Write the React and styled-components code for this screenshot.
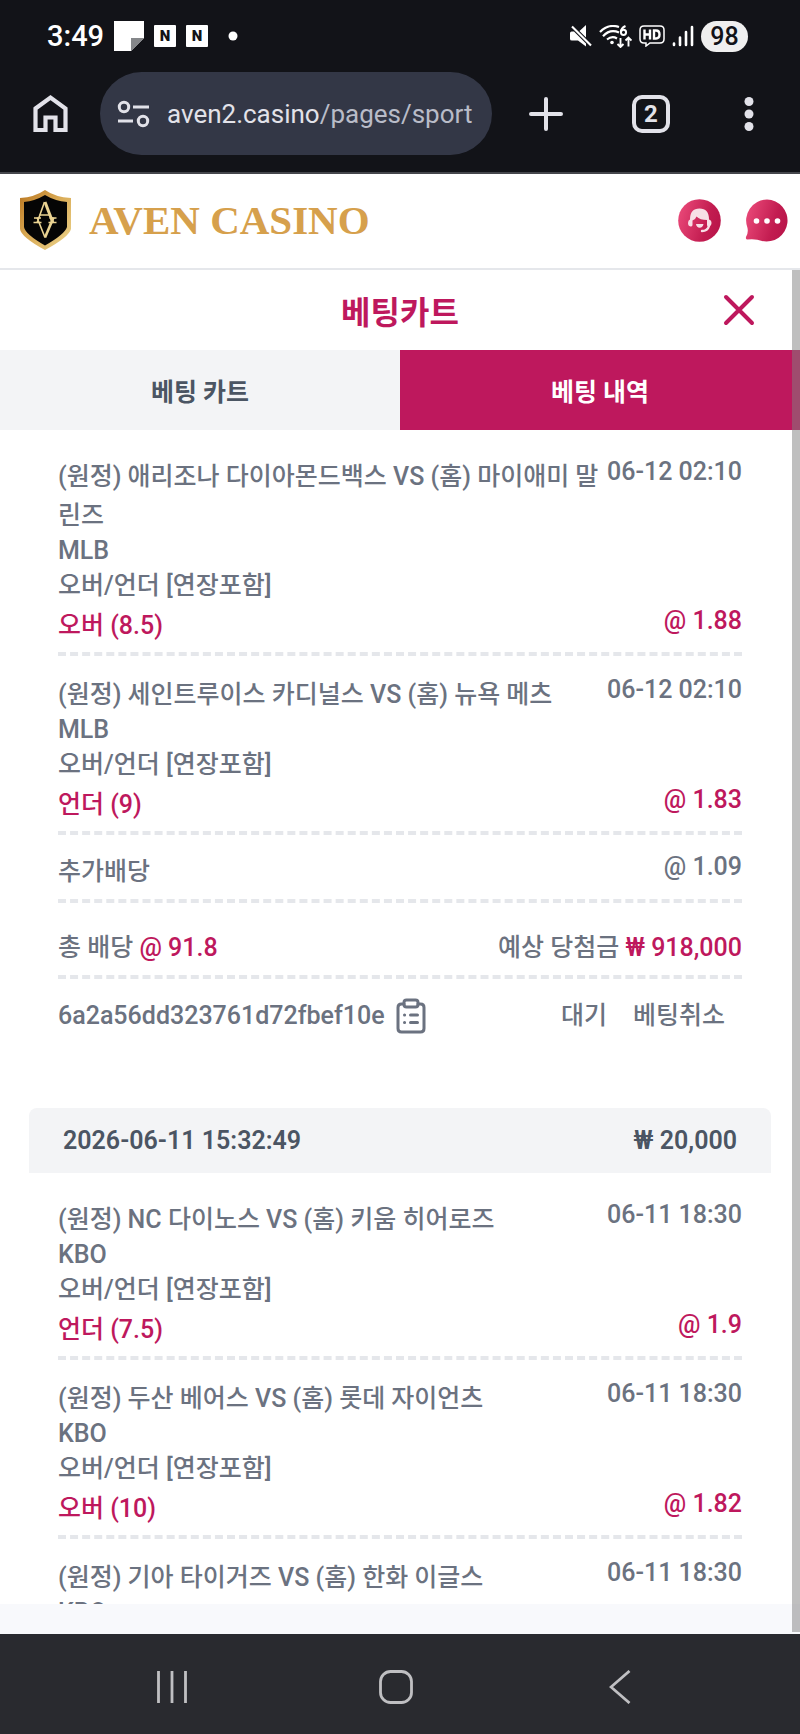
import React, { useState } from "react";
import styled, { createGlobalStyle } from "styled-components";

const GlobalStyle = createGlobalStyle`
    * {
        box-sizing: border-box;
    }
    body {
        margin: 0;
        background: #ffffff;
        font-family: Roboto, "Noto Sans CJK KR", sans-serif;
    }
    button {
        font-family: inherit;
        border: none;
        padding: 0;
        background: none;
        cursor: pointer;
    }
    svg {
        display: block;
        flex-shrink: 0;
    }
`;

const Screen = styled.div`
    display: flex;
    flex-direction: column;
    height: 100vh;
    overflow: hidden;
`;

const Chrome = styled.header`
    background: #121318;
    border-bottom: 2px solid #45474c;
    padding-bottom: 17px;
`;

const StatusBar = styled.div`
    display: flex;
    align-items: center;
    justify-content: space-between;
    height: 72px;
    padding: 0 52px 0 47px;
    color: #ffffff;
`;

const StatusGroup = styled.div`
    display: flex;
    align-items: center;
    gap: ${(props) => props.$gap}px;
`;

const Clock = styled.span`
    font-size: 29px;
    font-weight: 500;
`;

const AppBadge = styled.span`
    width: 22px;
    height: 22px;
    border-radius: 1px;
    background: #ffffff;
    color: #121318;
    font-size: 15px;
    line-height: 22px;
    font-weight: 900;
    text-align: center;
`;

const Battery = styled.span`
    width: 47px;
    height: 31px;
    border-radius: 16px;
    background: #efefef;
    color: #121318;
    font-size: 25px;
    line-height: 32px;
    font-weight: 500;
    text-align: center;
`;

const BrowserBar = styled.div`
    display: flex;
    align-items: center;
    padding: 0 41px 0 32px;
    color: #e2e2e9;
`;

const AddressBar = styled.button`
    display: flex;
    align-items: center;
    flex: 1;
    min-width: 0;
    height: 83px;
    margin: 0 37px 0 31px;
    padding: 0 12px 0 17px;
    border-radius: 42px;
    background: #333746;
    gap: 17px;
`;

const Url = styled.span`
    flex: 1;
    overflow: hidden;
    white-space: nowrap;
    text-align: left;
    font-size: 26px;
    color: #b9bcc8;

    b {
        font-weight: 400;
        color: #e2e2e9;
    }
`;

const BrowserActions = styled.div`
    display: flex;
    align-items: center;
    gap: 69px;
`;

const IconButton = styled.button`
    display: flex;
    color: ${(props) => props.color || "#e2e2e9"};
`;

const TabCount = styled.button`
    width: 38px;
    height: 38px;
    border: 4px solid #e2e2e9;
    border-radius: 10px;
    color: #e2e2e9;
    font-size: 24px;
    line-height: 30px;
    font-weight: 700;
`;

const SiteHeader = styled.header`
    display: flex;
    align-items: center;
    justify-content: space-between;
    height: 96px;
    padding: 0 12px 2px 19px;
    border-bottom: 2px solid #e5e7eb;
`;

const Brand = styled.a`
    display: flex;
    align-items: center;
    gap: 17px;
    color: #d6a04c;
    font-family: "Liberation Serif", serif;
    font-size: 41px;
    font-weight: 700;
    text-decoration: none;
`;

const HeaderActions = styled.div`
    display: flex;
    gap: 24px;
`;

const Page = styled.main`
    position: relative;
    flex: 1;
    min-height: 0;
    display: flex;
    flex-direction: column;
    padding-bottom: 30px;
    background: #f8f9fc;
`;

const ScrollThumb = styled.div`
    position: absolute;
    top: 0;
    right: 0;
    bottom: 2px;
    width: 8px;
    background: rgba(128, 128, 128, 0.5);
`;

const TitleBar = styled.div`
    display: grid;
    grid-template-columns: 1fr auto 1fr;
    align-items: center;
    height: 80px;
    padding: 0 45px;
    background: #ffffff;

    button {
        justify-self: end;
    }
`;

const Title = styled.h1`
    grid-column: 2;
    margin: 0;
    color: #be185d;
    font-size: 32px;
    font-weight: 700;
`;

const Tabs = styled.div`
    display: flex;
    flex-shrink: 0;
`;

const Tab = styled.button`
    flex: 1;
    height: 80px;
    font-size: 25px;
    font-weight: 600;
    color: ${(props) => (props.$active ? "#ffffff" : "#4b5563")};
    background: ${(props) => (props.$active ? "#be185d" : "#f3f4f6")};
`;

const History = styled.div`
    flex: 1;
    min-height: 0;
    overflow: hidden;
    background: #ffffff;
    color: #6b7280;
    font-size: 25px;
    line-height: 39px;
    font-weight: 500;
`;

const Slip = styled.section`
    margin: 0 29px;
`;

const SlipHeader = styled.div`
    display: flex;
    justify-content: space-between;
    margin-top: 73px;
    padding: 13px 34px;
    border-radius: 8px 8px 0 0;
    background: #f3f4f6;
    color: #4b5563;
    font-weight: 600;
`;

const SlipBody = styled.div`
    padding: 8px 29px 0;
`;

const Entry = styled.div`
    padding: 19px 0 7px;
    border-bottom: 4px dashed #e5e7eb;
`;

const Bonus = styled(Entry)`
    padding: 17px 0 8px;
`;

const Totals = styled(Entry)`
    display: flex;
    justify-content: space-between;
    padding: 25px 0 8px;
`;

const Line = styled.div`
    display: flex;
    justify-content: space-between;
    align-items: flex-start;
`;

const PickLine = styled(Line)`
    padding-top: 1px;
    color: #be185d;
`;

const Teams = styled.div`
    flex: 1;
    word-break: break-all;
`;

const League = styled.div`
    line-height: 31px;
`;

const Aside = styled.div`
    flex-shrink: 0;
    line-height: 29px;
`;

const Accent = styled.span`
    color: #be185d;
`;

const SlipFooter = styled.div`
    display: flex;
    align-items: center;
    justify-content: space-between;
    padding: 17px 17px 0 0;
`;

const SlipId = styled.div`
    display: flex;
    align-items: center;
    gap: 11px;
`;

const SlipStatus = styled.div`
    display: flex;
    gap: 26px;

    button {
        color: inherit;
        font-size: inherit;
        font-weight: inherit;
        line-height: inherit;
    }
`;

const NavBar = styled.nav`
    display: grid;
    grid-template-columns: repeat(3, 1fr);
    justify-items: center;
    align-items: center;
    flex-shrink: 0;
    height: 100px;
    padding: 6px 68px 0 60px;
    background: #292a2f;
`;

const slips = [
    {
        bets: [
            { teams: "(원정) 애리조나 다이아몬드백스 VS (홈) 마이애미 말린즈", league: "MLB", pick: "오버 (8.5)", odds: "1.88", date: "06-12 02:10" },
            { teams: "(원정) 세인트루이스 카디널스 VS (홈) 뉴욕 메츠", league: "MLB", pick: "언더 (9)", odds: "1.83", date: "06-12 02:10" },
        ],
        bonus: "1.09",
        total: "91.8",
        payout: "918,000",
        id: "6a2a56dd323761d72fbef10e",
    },
    {
        placed: "2026-06-11 15:32:49",
        stake: "20,000",
        bets: [
            { teams: "(원정) NC 다이노스 VS (홈) 키움 히어로즈", league: "KBO", pick: "언더 (7.5)", odds: "1.9", date: "06-11 18:30" },
            { teams: "(원정) 두산 베어스 VS (홈) 롯데 자이언츠", league: "KBO", pick: "오버 (10)", odds: "1.82", date: "06-11 18:30" },
            { teams: "(원정) 기아 타이거즈 VS (홈) 한화 이글스", league: "KBO", date: "06-11 18:30" },
        ],
    },
];

function NoteIcon() {
    return (
        <svg width="30" height="30" viewBox="0 0 30 30">
            <path d="M0 0h30v17L17 30H0z" fill="#fff" />
            <path d="M30 17H17v13z" fill="#85878a" />
        </svg>
    );
}

function MuteIcon() {
    return (
        <svg width="22" height="22" viewBox="0 0 22 22" fill="#fff">
            <path d="M9.5 6L16 0v12.500zM0 8.200Q0 6.600 1.600 6.600H4L16 18.600V21.500L8 15.600H2Q0 15.600 0 14z" />
            <path d="M2 1.500L21 20.500" stroke="#fff" strokeWidth="2.200" />
        </svg>
    );
}

function WifiIcon() {
    return (
        <svg width="33" height="23" viewBox="0 0 33 23" fill="none" stroke="#fff" strokeWidth="2.200">
            <path d="M1 7Q9-1.500 20 2M4 11.200Q11 3.500 20 7.500M8 14.500Q13 10.500 18 13.500" />
            <circle cx="13" cy="17.500" r="1.800" fill="#fff" stroke="none" />
            <path d="M26.500 1Q22 3 22 7" />
            <circle cx="24.500" cy="7.300" r="2.600" strokeWidth="2" />
            <path d="M21.500 13v9M18.500 19l3 3 3-3M29.500 21.500v-9M26.500 15.500l3-3 3 3" strokeWidth="1.900" />
        </svg>
    );
}

function HdIcon() {
    return (
        <svg width="26" height="22" viewBox="0 0 26 22" fill="none" stroke="#fff">
            <path d="M5 1h16q4 0 4 4v9q0 4-4 4H11l-4 3v-3H5q-4 0-4-4V5q0-4 4-4z" strokeWidth="1.500" />
            <path d="M5.500 4.500v10M11 4.500v10M5.500 9.500H11M15 5.500h2q3.500 0 3.500 4t-3.500 4h-2z" strokeWidth="2.400" />
        </svg>
    );
}

function SignalIcon() {
    return (
        <svg width="22" height="22" viewBox="0 0 22 22" stroke="#fff" strokeWidth="2.600" strokeLinecap="round">
            <path d="M2 18.500V20M8 12.500V20M14 7V20M20 2V20" />
        </svg>
    );
}

function HomeIcon() {
    return (
        <svg width="37" height="40" viewBox="0 0 37 40" fill="none" stroke="currentColor" strokeWidth="4.200">
            <path d="M3.500 14.500L18.500 3.500l15 11V36H23.500V23.500h-10V36H3.500z" />
        </svg>
    );
}

function TuneIcon() {
    return (
        <svg width="33" height="28" viewBox="0 0 33 28" fill="none" stroke="#e2e2e9" strokeWidth="3">
            <circle cx="7" cy="7" r="4.700" />
            <circle cx="26" cy="21" r="4.700" />
            <path d="M16 7h16M1 21h15" />
        </svg>
    );
}

function PlusIcon() {
    return (
        <svg width="34" height="34" viewBox="0 0 34 34" stroke="currentColor" strokeWidth="4" strokeLinecap="round">
            <path d="M17 2v30M2 17h30" />
        </svg>
    );
}

function MoreIcon() {
    return (
        <svg width="20" height="34" viewBox="0 0 20 34" fill="currentColor">
            <circle cx="10" cy="4.500" r="4.500" />
            <circle cx="10" cy="17" r="4.500" />
            <circle cx="10" cy="29.500" r="4.500" />
        </svg>
    );
}

function ShieldLogo() {
    return (
        <svg width="53" height="62" viewBox="0 0 53 62">
            <defs>
                <linearGradient id="gold" x1="0" y1="0" x2="1" y2="1">
                    <stop offset="0" stopColor="#b9751f" />
                    <stop offset="0.450" stopColor="#d9aa55" />
                    <stop offset="1" stopColor="#ecd58e" />
                </linearGradient>
            </defs>
            <path d="M26 1Q36 8 52 9V40Q50 48 26 61Q2 48 1 40V9Q16 8 26 1z" fill="url(#gold)" />
            <path d="M26 6Q36 12 48 13V38Q46 45 26 56.500Q6 45 5 38V13Q16 12 26 6z" fill="#050505" />
            <g fill="none" stroke="#ead392">
                <path d="M25.500 13L18 34M18 28.500L26 48.500" strokeWidth="1.600" />
                <path d="M26 13L34 34" strokeWidth="3" />
                <path d="M34.500 28.500L26 48.500" strokeWidth="2.600" />
                <path d="M20.500 26h10M15 29h7M30.500 29h7M14.500 33.500h8M29.500 33.500h8" strokeWidth="1.600" />
            </g>
        </svg>
    );
}

function SupportIcon() {
    return (
        <svg width="43" height="43" viewBox="0 0 43 43">
            <defs>
                <linearGradient id="pink" x1="0" y1="0.300" x2="1" y2="0.600">
                    <stop offset="0" stopColor="#e94878" />
                    <stop offset="0.700" stopColor="#c21c50" />
                    <stop offset="1" stopColor="#b9154a" />
                </linearGradient>
            </defs>
            <circle cx="21.500" cy="21.500" r="21.300" fill="url(#pink)" />
            <path d="M12 20.500Q12 9.500 21.500 9.500T31 20.500Q33.500 21 33.500 24T30.500 27.500Q29 27.500 29 26V21Q22 21 18.500 17.500Q17.500 20.500 14.500 21.500V26Q14.500 27.500 12.500 27.500Q10 27 10 24T12 20.500z" fill="#f7dfe6" />
            <path d="M18 25h7.500q-.8 3.800-3.800 3.800T18 25z" fill="#f7dfe6" />
            <path d="M31 27Q29.500 32 24 32" fill="none" stroke="#f7dfe6" strokeWidth="2.400" strokeLinecap="round" />
        </svg>
    );
}

function ChatIcon() {
    return (
        <svg width="43" height="43" viewBox="0 0 43 43">
            <path d="M22 .500A21 21 0 1 1 17 42Q11 39.500 2 40.500Q.500 40.500 1 38Q3.500 34 2.500 29A21 21 0 0 1 22 .500z" fill="url(#pink)" />
            <circle cx="11.500" cy="22" r="2.800" fill="#fff" />
            <circle cx="22" cy="22" r="2.800" fill="#fff" />
            <circle cx="32.500" cy="22" r="2.800" fill="#fff" />
        </svg>
    );
}

function CloseIcon() {
    return (
        <svg width="32" height="32" viewBox="0 0 32 32" stroke="currentColor" strokeWidth="4" strokeLinecap="round">
            <path d="M3 3l26 26M29 3L3 29" />
        </svg>
    );
}

function ClipboardIcon() {
    return (
        <svg width="30" height="36" viewBox="0 0 30 36" fill="none" stroke="currentColor" strokeWidth="3" strokeLinecap="round" strokeLinejoin="round">
            <path d="M8 6H5.500Q2 6 2 9.500V30.500Q2 34 5.500 34h19q3.500 0 3.500-3.500v-21Q28 6 24.500 6H22" />
            <rect x="8" y="2" width="14" height="7" rx="2.500" />
            <path d="M14.500 17H21.500M14.500 24.500H21.500" />
            <path d="M8.500 17h.1M8.500 24.500h.1" />
        </svg>
    );
}

function Bet({ bet }) {
    return (
        <Entry>
            <Line>
                <Teams>{bet.teams}</Teams>
                <Aside>{bet.date}</Aside>
            </Line>
            <League>{bet.league}</League>
            {bet.pick && (
                <>
                    <div>오버/언더 [연장포함]</div>
                    <PickLine>
                        <span>{bet.pick}</span>
                        <Aside>@ {bet.odds}</Aside>
                    </PickLine>
                </>
            )}
        </Entry>
    );
}

function BetSlip({ slip }) {
    return (
        <Slip>
            {slip.placed && (
                <SlipHeader>
                    <span>{slip.placed}</span>
                    <span>₩ {slip.stake}</span>
                </SlipHeader>
            )}
            <SlipBody>
                {slip.bets.map((bet) => (
                    <Bet key={bet.teams} bet={bet} />
                ))}
                {slip.id && (
                    <>
                        <Bonus>
                            <Line>
                                <span>추가배당</span>
                                <Aside>@ {slip.bonus}</Aside>
                            </Line>
                        </Bonus>
                        <Totals>
                            <span>총 배당 <Accent>@ {slip.total}</Accent></span>
                            <span>예상 당첨금 <Accent>₩ {slip.payout}</Accent></span>
                        </Totals>
                        <SlipFooter>
                            <SlipId>
                                <span>{slip.id}</span>
                                <IconButton color="#6b7280" aria-label="복사"><ClipboardIcon /></IconButton>
                            </SlipId>
                            <SlipStatus>
                                <span>대기</span>
                                <button>베팅취소</button>
                            </SlipStatus>
                        </SlipFooter>
                    </>
                )}
            </SlipBody>
        </Slip>
    );
}

function App() {

    const [tab, setTab] = useState("history");

    return (

        <Screen>
            <GlobalStyle />

            <Chrome>
                <StatusBar>
                    <StatusGroup $gap={10}>
                        <Clock>3:49</Clock>
                        <NoteIcon />
                        <AppBadge>N</AppBadge>
                        <AppBadge>N</AppBadge>
                        <svg width="30" height="10" viewBox="0 0 30 10"><circle cx="15" cy="5" r="4.500" fill="#fff" /></svg>
                    </StatusGroup>
                    <StatusGroup $gap={7}>
                        <MuteIcon />
                        <WifiIcon />
                        <HdIcon />
                        <SignalIcon />
                        <Battery>98</Battery>
                    </StatusGroup>
                </StatusBar>
                <BrowserBar>
                    <IconButton aria-label="홈"><HomeIcon /></IconButton>
                    <AddressBar>
                        <TuneIcon />
                        <Url><b>aven2.casino</b>/pages/sport</Url>
                    </AddressBar>
                    <BrowserActions>
                        <IconButton aria-label="새 탭"><PlusIcon /></IconButton>
                        <TabCount>2</TabCount>
                        <IconButton aria-label="메뉴"><MoreIcon /></IconButton>
                    </BrowserActions>
                </BrowserBar>
            </Chrome>

            <SiteHeader>
                <Brand href="#">
                    <ShieldLogo />
                    <span>AVEN CASINO</span>
                </Brand>
                <HeaderActions>
                    <IconButton aria-label="고객센터"><SupportIcon /></IconButton>
                    <IconButton aria-label="채팅"><ChatIcon /></IconButton>
                </HeaderActions>
            </SiteHeader>

            <Page>
                <TitleBar>
                    <Title>베팅카트</Title>
                    <IconButton color="#be185d" aria-label="닫기"><CloseIcon /></IconButton>
                </TitleBar>
                <Tabs>
                    <Tab $active={tab === "cart"} onClick={() => setTab("cart")}>베팅 카트</Tab>
                    <Tab $active={tab === "history"} onClick={() => setTab("history")}>베팅 내역</Tab>
                </Tabs>
                <History>
                    {tab === "history" && slips.map((slip, index) => (
                        <BetSlip key={index} slip={slip} />
                    ))}
                </History>
                <ScrollThumb />
            </Page>

            <NavBar>
                <IconButton color="#bfbfc2" aria-label="최근 앱">
                    <svg width="32" height="34" viewBox="0 0 32 34" stroke="currentColor" strokeWidth="2.800">
                        <path d="M2.500 1v32M16 1v32M29.500 1v32" />
                    </svg>
                </IconButton>
                <IconButton color="#bfbfc2" aria-label="홈 화면">
                    <svg width="34" height="34" viewBox="0 0 34 34" fill="none" stroke="currentColor" strokeWidth="2.800">
                        <rect x="1.500" y="1.500" width="31" height="31" rx="10" />
                    </svg>
                </IconButton>
                <IconButton color="#bfbfc2" aria-label="뒤로">
                    <svg width="22" height="34" viewBox="0 0 22 34" fill="none" stroke="currentColor" strokeWidth="2.800">
                        <path d="M20.500 1L2 17l18.500 16" />
                    </svg>
                </IconButton>
            </NavBar>
        </Screen>

    );
}

export default App;
